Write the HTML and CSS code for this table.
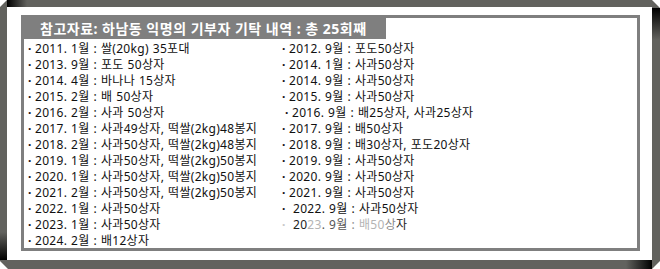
FILE: index.html
```html
<!DOCTYPE html>
<html lang="ko">
<head>
<meta charset="utf-8">
<title>하남동 익명의 기부자 기탁 내역</title>
<link rel="stylesheet" href="styles.css">
</head>
<body>
<div class="frame">
  <div class="mat">
    <section class="box">
      <h2 class="header">참고자료: 하남동 익명의 기부자 기탁 내역 : 총 25회째</h2>
      <div class="cols">
        <ul class="col">
          <li>2011. 1월 : 쌀(20kg) 35포대</li>
          <li>2013. 9월 : 포도 50상자</li>
          <li>2014. 4월 : 바나나 15상자</li>
          <li>2015. 2월 : 배 50상자</li>
          <li>2016. 2월 : 사과 50상자</li>
          <li>2017. 1월 : 사과49상자, 떡쌀(2kg)48봉지</li>
          <li>2018. 2월 : 사과50상자, 떡쌀(2kg)48봉지</li>
          <li>2019. 1월 : 사과50상자, 떡쌀(2kg)50봉지</li>
          <li>2020. 1월 : 사과50상자, 떡쌀(2kg)50봉지</li>
          <li>2021. 2월 : 사과50상자, 떡쌀(2kg)50봉지</li>
          <li>2022. 1월 : 사과50상자</li>
          <li>2023. 1월 : 사과50상자</li>
          <li>2024. 2월 : 배12상자</li>
        </ul>
        <ul class="col">
          <li>2012. 9월 : 포도50상자</li>
          <li>2014. 1월 : 사과50상자</li>
          <li>2014. 9월 : 사과50상자</li>
          <li>2015. 9월 : 사과50상자</li>
          <li class="shift">2016. 9월 : 배25상자, 사과25상자</li>
          <li>2017. 9월 : 배50상자</li>
          <li>2018. 9월 : 배30상자, 포도20상자</li>
          <li>2019. 9월 : 사과50상자</li>
          <li>2020. 9월 : 사과50상자</li>
          <li>2021. 9월 : 사과50상자</li>
          <li class="gap">2022. 9월 : 사과50상자</li>
          <li class="gap faded"><span class="dk">20</span><span class="lt">23</span><span class="md">. 9월</span> <span class="mg">:</span> <span class="lt">배50</span><span class="mg">상</span><span class="dk">자</span></li>
        </ul>
      </div>
    </section>
  </div>
</div>
</body>
</html>
```
FILE: styles.css
```css
html, body {
  margin: 0;
  padding: 0;
  background: #ffffff;
}

.frame {
  width: 660px;
  height: 269px;
  box-sizing: border-box;
  padding: 7px 8px 9px 7px;
  background-color: #62625e;
  background-image:
    linear-gradient(to right, #000000, #62625e),
    linear-gradient(to bottom, #000000, #62625e),
    linear-gradient(to right, #62625e, #000000),
    linear-gradient(to bottom, #62625e, #000000);
  background-repeat: no-repeat;
  background-size: 20px 7px, 8px 32px, 26px 9px, 7px 28px;
  background-position: 7px 0, right 0 top 8px, right 8px bottom 0, left 0 bottom 9px;
  clip-path: polygon(7px 0, calc(100% - 8px) 0, 100% 8px, 100% calc(100% - 8px), calc(100% - 8px) 100%, 8px 100%, 0 calc(100% - 8px), 0 7px);
}

.mat {
  height: 100%;
  box-sizing: border-box;
  background: #ffffff;
  padding: 8px 12px 9px 14px;
}

.box {
  height: 100%;
  box-sizing: border-box;
  border: 3px solid #7f7f7f;
  font-family: "Noto Sans", "Noto Sans CJK KR", sans-serif;
}

.header {
  display: block;
  width: fit-content;
  margin: 0;
  height: 21px;
  line-height: 21px;
  padding: 0 19px 0 16px;
  background: #7f7f7f;
  color: #ffffff;
  font-size: 14px;
  font-weight: bold;
  letter-spacing: 0.5px;
}

.cols {
  display: flex;
  padding: 2px 0 0 4px;
}

.col {
  list-style: none;
  margin: 0;
  padding: 0;
  font-size: 12px;
  line-height: 16px;
  color: #111111;
  white-space: nowrap;
  letter-spacing: 0.3px;
  word-spacing: 0.5px;
}

.col:first-child {
  width: 254px;
}

.col li::before {
  content: "·";
  display: inline-block;
  width: 7px;
  font-weight: bold;
}

.col li.shift {
  padding-left: 3px;
}

.col li.gap::before {
  width: 11px;
}

.col li.faded::before {
  color: #c8c8c8;
}

.faded .dk { color: #222222; }
.faded .md { color: #555555; }
.faded .mg { color: #8a8a8a; }
.faded .lt { color: #b4b4b4; }
```
